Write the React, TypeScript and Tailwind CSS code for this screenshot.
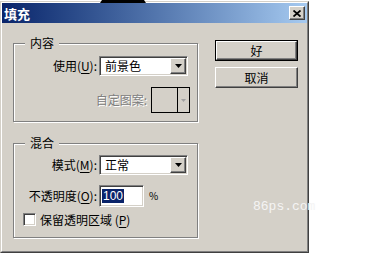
import React from "react";

const sunken =
  "border border-t-[#808080] border-l-[#808080] border-r-white border-b-white shadow-[inset_1px_1px_0_#404040,inset_-1px_-1px_0_#d4d0c8]";
const raised =
  "border border-t-white border-l-white border-r-[#404040] border-b-[#404040] shadow-[inset_-1px_-1px_0_#808080,inset_1px_1px_0_#d4d0c8]";

function Tri({ color = "#000" }: { color?: string }) {
  return (
    <svg width="7" height="4" viewBox="0 0 7 4">
      <polygon points="0,0 7,0 3.5,4" fill={color} />
    </svg>
  );
}

function Select({ value }: { value: string }) {
  return (
    <div className={`w-[89px] h-[20px] bg-white flex items-center ${sunken}`}>
      <span className="flex-1 pl-[5px] leading-none">{value}</span>
      <div className={`w-[16px] h-[16px] mr-[1px] bg-[#d4d0c8] flex items-center justify-center ${raised}`}>
        <Tri />
      </div>
    </div>
  );
}

function U({ children }: { children: React.ReactNode }) {
  return <span className="underline underline-offset-2">{children}</span>;
}

function Group({ title, h, children }: { title: string; h: string; children: React.ReactNode }) {
  return (
    <div className={`relative ${h} border border-[#808080] shadow-[1px_1px_0_#fff,inset_1px_1px_0_#fff]`}>
      <span className="absolute left-[11px] top-[-9px] px-[5px] bg-[#d4d0c8] leading-[16px]">{title}</span>
      {children}
    </div>
  );
}

export default function App() {
  return (
    <div className="relative w-[376px] h-[253px] bg-white overflow-hidden text-[12px] text-black font-['Noto_Sans_CJK_SC','Noto_Sans',sans-serif]">
      <div className="mt-[1px] w-[309px] h-[252px] bg-[#d4d0c8] border border-t-[#d4d0c8] border-l-[#d4d0c8] border-r-[#404040] border-b-[#404040]">
        <div className="h-full flex flex-col border border-t-white border-l-white border-r-[#808080] border-b-[#808080]">
          <div className="h-[20px] flex items-center justify-between pl-[2px] pr-[2px] bg-gradient-to-r from-[#0a246a] to-[#a6caf0]">
            <span className="text-white font-bold text-[13px] leading-none">填充</span>
            <div className={`w-[16px] h-[14px] bg-[#d4d0c8] flex items-center justify-center ${raised}`}>
              <svg width="8" height="7" viewBox="0 0 8 7">
                <path d="M0.5 0.5 L7.5 6.5 M7.5 0.5 L0.5 6.5" stroke="#000" strokeWidth="1.8" />
              </svg>
            </div>
          </div>
          <div className="flex pl-[11px] pt-[17px]">
            <div className="w-[185px] mt-[3px] flex flex-col gap-[21px]">
              <Group title="内容" h="h-[79px]">
                <div className="flex flex-col pt-[12px]">
                  <div className="flex items-center h-[20px]">
                    <span className="w-[83px] text-right leading-none">
                      使用(<U>U</U>):
                    </span>
                    <div className="ml-[2px]">
                      <Select value="前景色" />
                    </div>
                  </div>
                  <div className="flex items-center justify-end h-[26px] mt-[11px] pr-[7px] gap-[4px]">
                    <span className="text-[#808080] leading-none [text-shadow:1px_1px_0_#fff]">自定图案:</span>
                    <div className="w-[39px] h-[26px] border border-black flex">
                      <div className="flex-1 border-r border-black" />
                      <div className="w-[11px] flex items-center justify-center">
                        <svg width="5" height="3" viewBox="0 0 5 3">
                          <polygon points="0,0 5,0 2.5,3" fill="#a0a0a0" />
                        </svg>
                      </div>
                    </div>
                  </div>
                </div>
              </Group>
              <Group title="混合" h="h-[95px]">
                <div className="flex flex-col pt-[11px]">
                  <div className="flex items-center h-[20px]">
                    <span className="w-[83px] text-right leading-none">
                      模式(<U>M</U>):
                    </span>
                    <div className="ml-[2px]">
                      <Select value="正常" />
                    </div>
                  </div>
                  <div className="flex items-center h-[22px] mt-[10px]">
                    <span className="w-[83px] text-right leading-none">
                      不透明度(<U>O</U>):
                    </span>
                    <div className={`ml-[2px] w-[45px] h-[22px] bg-white flex items-center pl-[2px] ${sunken}`}>
                      <span className="bg-[#0a246a] text-white leading-[14px] px-[1px] font-['Liberation_Sans',sans-serif]">100</span>
                    </div>
                    <span className="ml-[5px] text-[10px] leading-none">%</span>
                  </div>
                  <div className="flex items-center h-[13px] mt-[6px] pl-[9px]">
                    <div className={`w-[13px] h-[13px] bg-white ${sunken}`} />
                    <span className="ml-[4px] leading-none">
                      保留透明区域 (<U>P</U>)
                    </span>
                  </div>
                </div>
              </Group>
            </div>
            <div className="ml-[17px] w-[83px] flex flex-col gap-[6px]">
              <div className="h-[21px] border border-black">
                <div className={`h-full flex items-center justify-center bg-[#d4d0c8] ${raised}`}>
                  <span className="leading-none">好</span>
                </div>
              </div>
              <div className={`h-[21px] flex items-center justify-center bg-[#d4d0c8] ${raised}`}>
                <span className="leading-none">取消</span>
              </div>
            </div>
          </div>
        </div>
      </div>
      <span className="absolute left-[253px] top-[199px] text-[13px] leading-[16px] text-[#f4f4f4] font-['Liberation_Mono','Courier_New',monospace]">
        86ps.com
      </span>
      <svg className="absolute left-[100px] top-0" width="46" height="3" viewBox="0 0 46 3">
        <polygon points="2,0 44,0 46,3 0,3" fill="#000" />
      </svg>
    </div>
  );
}
